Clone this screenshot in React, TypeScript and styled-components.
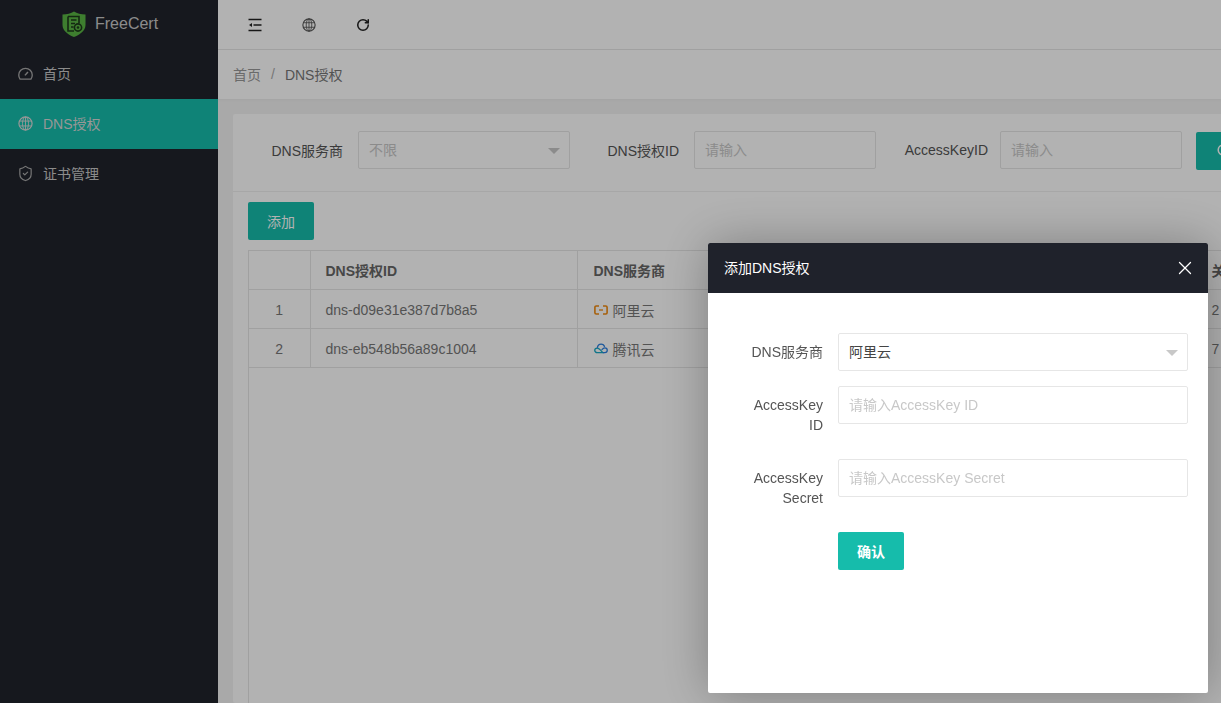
import * as React from 'react'
import styled, { createGlobalStyle } from 'styled-components'
import { X, RotateCw, ShieldCheck } from 'lucide-react'

// ______________________________________________________
//
// @ Global

const GlobalStyle = createGlobalStyle`
  html, body, #root {
    margin: 0;
    height: 100%;
  }
  body {
    overflow: hidden;
    font-family: "Liberation Sans", "Noto Sans CJK SC", sans-serif;
    font-size: 14px;
    color: #666;
  }
  * {
    box-sizing: border-box;
  }
`

// ______________________________________________________
//
// @ Shell

const Page = styled.div`
  display: flex;
  height: 100%;
  overflow: hidden;
  background: #f2f2f2;
`

const Sidebar = styled.aside`
  flex: 0 0 218px;
  background: #20232c;
  color: #c8c8c8;
`

const Brand = styled.div`
  display: flex;
  align-items: center;
  gap: 9px;
  height: 49px;
  padding: 0 0 1px 62px;
  font-size: 16px;
`

const MenuItem = styled.div<{ $active?: boolean }>`
  display: flex;
  align-items: center;
  gap: 10px;
  height: 50px;
  padding: 0 0 2px 18px;
  background: ${p => (p.$active ? '#16bcab' : 'transparent')};
  color: ${p => (p.$active ? '#d8d8d8' : '#c8c8c8')};
  > svg {
    flex: none;
    color: ${p => (p.$active ? '#d8d8d8' : '#a8a8a8')};
  }
`

const ShieldIcon = styled(ShieldCheck)`
  margin: 0 -1px;
`

const Main = styled.main`
  flex: 1;
  min-width: 0;
  display: flex;
  flex-direction: column;
  overflow: hidden;
`

const Topbar = styled.header`
  flex: 0 0 50px;
  display: flex;
  align-items: center;
  gap: 40px;
  padding-left: 30px;
  background: #fff;
  border-bottom: 1px solid #e6e6e6;
  color: #222;
`

const TopGlobe = styled.span`
  display: flex;
  color: #555;
`

const Crumbs = styled.nav`
  flex: 0 0 49px;
  display: flex;
  align-items: center;
  padding: 0 0 2px 15px;
  background: #fff;
  box-shadow: 0 1px 3px rgba(0, 0, 0, 0.04);
  color: #999;
`

const CrumbSep = styled.span`
  margin: 0 10px;
  color: #aaa;
`

const CrumbCurrent = styled.span`
  color: #777;
`

const Card = styled.section`
  flex: 1;
  display: flex;
  flex-direction: column;
  width: 1000px;
  margin: 15px 0 0 15px;
  background: #fff;
  border-radius: 2px;
`

// ______________________________________________________
//
// @ Filter

const Filter = styled.div`
  flex: 0 0 78px;
  display: flex;
  align-items: flex-start;
  gap: 24px;
  padding: 17px 0 0 20px;
  border-bottom: 1px solid #f0f0f0;
`

const FilterItem = styled.div`
  display: flex;
  align-items: center;
`

const FilterLabel = styled.label<{ $width: number; $gap: number }>`
  width: ${p => p.$width}px;
  padding: 0 ${p => p.$gap}px 1px 0;
  text-align: right;
  white-space: nowrap;
  color: #555;
`

const Field = styled.input<{ $width?: number }>`
  display: block;
  width: ${p => (p.$width ? `${p.$width}px` : '100%')};
  height: 38px;
  padding: 0 10px;
  border: 1px solid #e6e6e6;
  border-radius: 2px;
  background: #fff;
  font: inherit;
  color: #444;
  outline: none;
  &::placeholder {
    color: #c8c8c8;
    opacity: 1;
  }
`

const SelectBox = styled.div<{ $width?: number; $muted?: boolean }>`
  position: relative;
  display: flex;
  align-items: center;
  width: ${p => (p.$width ? `${p.$width}px` : '100%')};
  height: 38px;
  padding: 0 10px 2px;
  border: 1px solid #e6e6e6;
  border-radius: 2px;
  background: #fff;
  color: ${p => (p.$muted ? '#c8c8c8' : '#444')};
  &::after {
    content: '';
    position: absolute;
    right: 9px;
    top: 16px;
    border: 6px solid transparent;
    border-top-color: #c8c8c8;
    border-bottom: 0;
  }
`

const Button = styled.button<{ $width?: number }>`
  display: inline-flex;
  align-items: center;
  justify-content: center;
  gap: 6px;
  flex: none;
  width: ${p => p.$width || 66}px;
  height: 38px;
  padding: 0;
  border: 0;
  border-radius: 2px;
  background: #16bcab;
  color: #fff;
  font: inherit;
`

const SearchButton = styled(Button)`
  margin: 1px 0 0 -10px;
`

// ______________________________________________________
//
// @ Table

const TableArea = styled.div`
  flex: 1;
  display: flex;
  flex-direction: column;
  align-items: flex-start;
  gap: 10px;
  padding: 10px 0 0 15px;
  min-height: 0;
`

const TableFrame = styled.div`
  flex: 1;
  width: 975px;
  border: 1px solid #e6e6e6;
  border-bottom: 0;
`

const Grid = styled.table`
  width: 100%;
  table-layout: fixed;
  border-collapse: collapse;
`

const HeadCell = styled.th<{ $width?: number }>`
  width: ${p => (p.$width ? `${p.$width}px` : 'auto')};
  height: 38px;
  padding: 0 15px;
  border-right: 1px solid #e6e6e6;
  border-bottom: 1px solid #e6e6e6;
  text-align: left;
  font-weight: 700;
  color: #666;
  white-space: nowrap;
  overflow: hidden;
`

const ProviderHead = styled(HeadCell)`
  padding-left: 16px;
`

const Cell = styled.td`
  height: 39px;
  padding: 2px 15px 0;
  border-right: 1px solid #e6e6e6;
  border-bottom: 1px solid #e6e6e6;
  color: #777;
  white-space: nowrap;
  overflow: hidden;
`

const ProviderCell = styled(Cell)`
  padding-left: 16px;
`

const IndexCell = styled(Cell)`
  position: relative;
  text-align: center;
  padding: 2px 0 0;
  box-shadow: 3px 0 5px -2px rgba(0, 0, 0, 0.1);
`

const IndexHead = styled(HeadCell)`
  position: relative;
  box-shadow: 3px 0 5px -2px rgba(0, 0, 0, 0.1);
`

const Provider = styled.span`
  display: inline-flex;
  align-items: center;
  gap: 5px;
`

// ______________________________________________________
//
// @ Dialog

const Shade = styled.div`
  position: fixed;
  inset: 0;
  background: rgba(0, 0, 0, 0.3);
`

const Dialog = styled.div`
  position: fixed;
  left: 708px;
  top: 243px;
  width: 500px;
  height: 450px;
  background: #fff;
  border-radius: 2px;
  box-shadow: 1px 1px 50px rgba(0, 0, 0, 0.3);
`

const DialogHead = styled.div`
  display: flex;
  align-items: center;
  justify-content: space-between;
  height: 50px;
  padding: 0 12px 0 16px;
  background: #1f222b;
  border-radius: 2px 2px 0 0;
  color: #fff;
`

const DialogTitle = styled.span`
  padding-bottom: 2px;
`

const DialogForm = styled.form`
  display: flex;
  flex-direction: column;
  gap: 15px;
  padding: 40px 20px 0 35px;
`

const FormRow = styled.div`
  display: flex;
  align-items: flex-start;
`

const FormLabel = styled.label`
  flex: 0 0 95px;
  padding: 9px 15px 9px 0;
  line-height: 20px;
  text-align: right;
  color: #555;
`

const FormControl = styled.div`
  flex: 1;
`

const ConfirmRow = styled.div`
  padding-left: 95px;
`

const ConfirmButton = styled(Button)`
  font-weight: 700;
`

// ______________________________________________________
//
// @ Icons

const Logo = () => (
  <svg width="24" height="26" viewBox="0 0 24 26">
    <path d="M12 0.5 C15 2.5 19 3.5 23.5 3.5 V14 C23.5 20 17 24 12 26 C7 24 0.5 20 0.5 14 V3.5 C5 3.5 9 2.5 12 0.5 Z" fill="#5ab544" />
    <path d="M6 5.5 H17 V12 M6 5.5 V20 H12" fill="none" stroke="#1d3a1a" strokeWidth="1.6" />
    <path d="M9 9 H14.5 M9 12.5 H13 M9 16 H11.5" stroke="#1d3a1a" strokeWidth="1.4" />
    <circle cx="16" cy="16.5" r="3.6" fill="none" stroke="#1d3a1a" strokeWidth="1.6" />
    <circle cx="16" cy="16.5" r="1.3" fill="#1d3a1a" />
  </svg>
)

const Globe = ({ size = 15 }: { size?: number }) => (
  <svg width={size} height={size} viewBox="0 0 16 16" fill="none" stroke="currentColor" strokeWidth="1">
    <circle cx="8" cy="8" r="7" strokeWidth="1.3" />
    <ellipse cx="8" cy="8" rx="3.2" ry="7" />
    <path d="M8 1 V15 M1.3 5.4 H14.7 M1.3 10.6 H14.7" />
  </svg>
)

const Gauge = () => (
  <svg width="15" height="15" viewBox="0 0 16 16" fill="none" stroke="currentColor" strokeWidth="1.4">
    <path d="M2.2 14 H13.8 C14.6 12.8 15.2 11.4 15.2 9.5 C15.2 5.5 12 2.5 8 2.5 C4 2.5 0.8 5.5 0.8 9.5 C0.8 11.4 1.4 12.8 2.2 14 Z" />
    <path d="M7.4 10 L10.6 6.4" strokeWidth="1.6" />
  </svg>
)

const Outdent = () => (
  <svg width="14" height="14" viewBox="0 0 14 14" fill="none" stroke="currentColor" strokeWidth="1.4">
    <path d="M0.5 1.5 H13.5 M5.5 7 H13.5 M0.5 12.5 H13.5" />
    <path d="M1 7 L4 5 V9 Z" fill="currentColor" stroke="none" />
  </svg>
)

const Aliyun = () => (
  <svg width="14" height="10" viewBox="0 0 14 10" fill="none" stroke="#f08a10" strokeWidth="1.6">
    <path d="M5 1 H2.2 C1.4 1 0.9 1.5 0.9 2.2 V7.8 C0.9 8.5 1.4 9 2.2 9 H5" />
    <path d="M9 1 H11.8 C12.6 1 13.1 1.5 13.1 2.2 V7.8 C13.1 8.5 12.6 9 11.8 9 H9" />
    <path d="M5 5 H9" strokeWidth="1.3" />
  </svg>
)

const Tencent = () => (
  <svg width="14" height="11" viewBox="0 0 15 11" fill="none" strokeWidth="1.4">
    <path d="M3.6 9.9 C1.9 9.9 0.8 8.8 0.8 7.4 C0.8 6 1.9 5 3.4 5 C4.8 5 5.6 5.7 7 7.2 L9.4 9.9 H3.6 Z" stroke="#17a8c4" />
    <path d="M3.6 4.8 C4 2.4 5.6 0.9 7.6 0.9 C9.4 0.9 10.8 2 11.4 3.8" stroke="#2a7fe0" />
    <path d="M9.4 9.9 H11.6 C13.2 9.9 14.2 8.8 14.2 7.4 C14.2 6 13.1 4.9 11.6 4.9 C10.4 4.9 9.4 5.7 8.2 7" stroke="#2a7fe0" />
  </svg>
)

const SearchGlyph = () => (
  <svg width="14" height="14" viewBox="0 0 14 14" fill="none" stroke="currentColor" strokeWidth="1.5">
    <circle cx="6" cy="6" r="4.8" />
    <path d="M9.5 9.5 L13 13" />
  </svg>
)

// ______________________________________________________
//
// @ Data

const rows = [
  { id: 'dns-d09e31e387d7b8a5', icon: <Aliyun />, name: '阿里云', extra: '2' },
  { id: 'dns-eb548b56a89c1004', icon: <Tencent />, name: '腾讯云', extra: '7' },
]

// ______________________________________________________
//
// @ View

const App: React.FC = () => (
  <>
    <GlobalStyle />
    <Page>
      <Sidebar>
        <Brand>
          <Logo />
          FreeCert
        </Brand>
        <MenuItem>
          <Gauge />
          首页
        </MenuItem>
        <MenuItem $active>
          <Globe />
          DNS授权
        </MenuItem>
        <MenuItem>
          <ShieldIcon size={17} strokeWidth={1.7} />
          证书管理
        </MenuItem>
      </Sidebar>
      <Main>
        <Topbar>
          <Outdent />
          <TopGlobe>
            <Globe size={14} />
          </TopGlobe>
          <RotateCw size={14} strokeWidth={2.6} />
        </Topbar>
        <Crumbs>
          首页
          <CrumbSep>/</CrumbSep>
          <CrumbCurrent>DNS授权</CrumbCurrent>
        </Crumbs>
        <Card>
          <Filter>
            <FilterItem>
              <FilterLabel $width={105} $gap={15}>DNS服务商</FilterLabel>
              <SelectBox $width={212} $muted>不限</SelectBox>
            </FilterItem>
            <FilterItem>
              <FilterLabel $width={100} $gap={15}>DNS授权ID</FilterLabel>
              <Field $width={182} placeholder="请输入" />
            </FilterItem>
            <FilterItem>
              <FilterLabel $width={100} $gap={12}>AccessKeyID</FilterLabel>
              <Field $width={182} placeholder="请输入" />
            </FilterItem>
            <SearchButton $width={90}>
              <SearchGlyph />
              查询
            </SearchButton>
          </Filter>
          <TableArea>
            <Button>添加</Button>
            <TableFrame>
              <Grid>
                <thead>
                  <tr>
                    <IndexHead $width={61} />
                    <HeadCell $width={267}>DNS授权ID</HeadCell>
                    <ProviderHead $width={619}>DNS服务商</ProviderHead>
                    <HeadCell>关联证书</HeadCell>
                  </tr>
                </thead>
                <tbody>
                  {rows.map((row, i) => (
                    <tr key={row.id}>
                      <IndexCell>{i + 1}</IndexCell>
                      <Cell>{row.id}</Cell>
                      <ProviderCell>
                        <Provider>
                          {row.icon}
                          {row.name}
                        </Provider>
                      </ProviderCell>
                      <Cell>{row.extra}</Cell>
                    </tr>
                  ))}
                </tbody>
              </Grid>
            </TableFrame>
          </TableArea>
        </Card>
      </Main>
    </Page>
    <Shade />
    <Dialog>
      <DialogHead>
        <DialogTitle>添加DNS授权</DialogTitle>
        <X size={22} strokeWidth={1.4} />
      </DialogHead>
      <DialogForm>
        <FormRow>
          <FormLabel>DNS服务商</FormLabel>
          <FormControl>
            <SelectBox>阿里云</SelectBox>
          </FormControl>
        </FormRow>
        <FormRow>
          <FormLabel>AccessKey ID</FormLabel>
          <FormControl>
            <Field placeholder="请输入AccessKey ID" />
          </FormControl>
        </FormRow>
        <FormRow>
          <FormLabel>AccessKey Secret</FormLabel>
          <FormControl>
            <Field placeholder="请输入AccessKey Secret" />
          </FormControl>
        </FormRow>
        <ConfirmRow>
          <ConfirmButton>确认</ConfirmButton>
        </ConfirmRow>
      </DialogForm>
    </Dialog>
  </>
)

export default App
